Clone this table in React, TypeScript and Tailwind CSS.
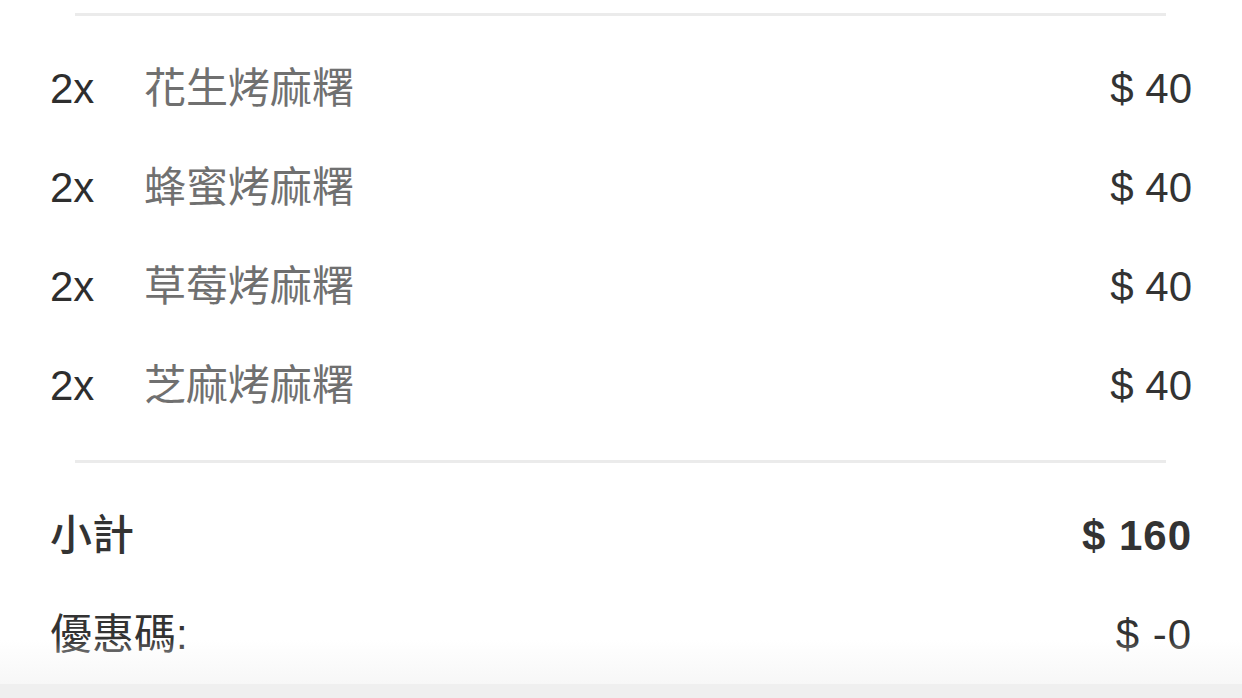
import { FC } from "react";

interface Item {
    qty: number;
    name: string;
    price: number;
}

const items: Item[] = [
    { qty: 2, name: "花生烤麻糬", price: 40 },
    { qty: 2, name: "蜂蜜烤麻糬", price: 40 },
    { qty: 2, name: "草莓烤麻糬", price: 40 },
    { qty: 2, name: "芝麻烤麻糬", price: 40 },
];

const Divider: FC = () => <div className="ml-[75px] mr-[76px] h-[3px] bg-[#ebebeb]" />;

const App: FC = () => {
    const subtotal = items.reduce((sum, i) => sum + i.price, 0);

    return (
        <div
            className="relative w-[1242px] h-[698px] overflow-hidden bg-white text-[42px] leading-none"
            style={{ fontFamily: '"Liberation Sans", "Noto Sans CJK TC", sans-serif' }}
        >
            <div className="pt-[13px]">
                <Divider />
                <div className="px-[50px] pt-[23px] pb-[25px]">
                    {items.map((item) => (
                        <div key={item.name} className="flex items-center h-[99px]">
                            <span className="w-[94px] text-[#2e2e2e]">{item.qty}x</span>
                            <span className="text-[#707070]">{item.name}</span>
                            <span className="ml-auto text-[#333333]">$ {item.price}</span>
                        </div>
                    ))}
                </div>
                <Divider />
                <div className="px-[50px] pt-[23px]">
                    <div className="flex items-center h-[99px] text-[#333333]">
                        <span className="font-medium">小計</span>
                        <span className="ml-auto font-bold tracking-[1px]">$ {subtotal}</span>
                    </div>
                    <div className="flex items-center h-[99px] text-[#333333]">
                        <span>優惠碼:</span>
                        <span className="ml-auto tracking-[1px]">$ -0</span>
                    </div>
                </div>
            </div>

            {/* bottom bar shadow */}
            <div className="absolute left-0 right-0 bottom-0 pointer-events-none">
                <div className="h-[44px] bg-gradient-to-b from-white/0 to-[#f7f7f7]" />
                <div className="h-[14px] bg-[#efefef]" />
            </div>
        </div>
    );
};

export default App;
